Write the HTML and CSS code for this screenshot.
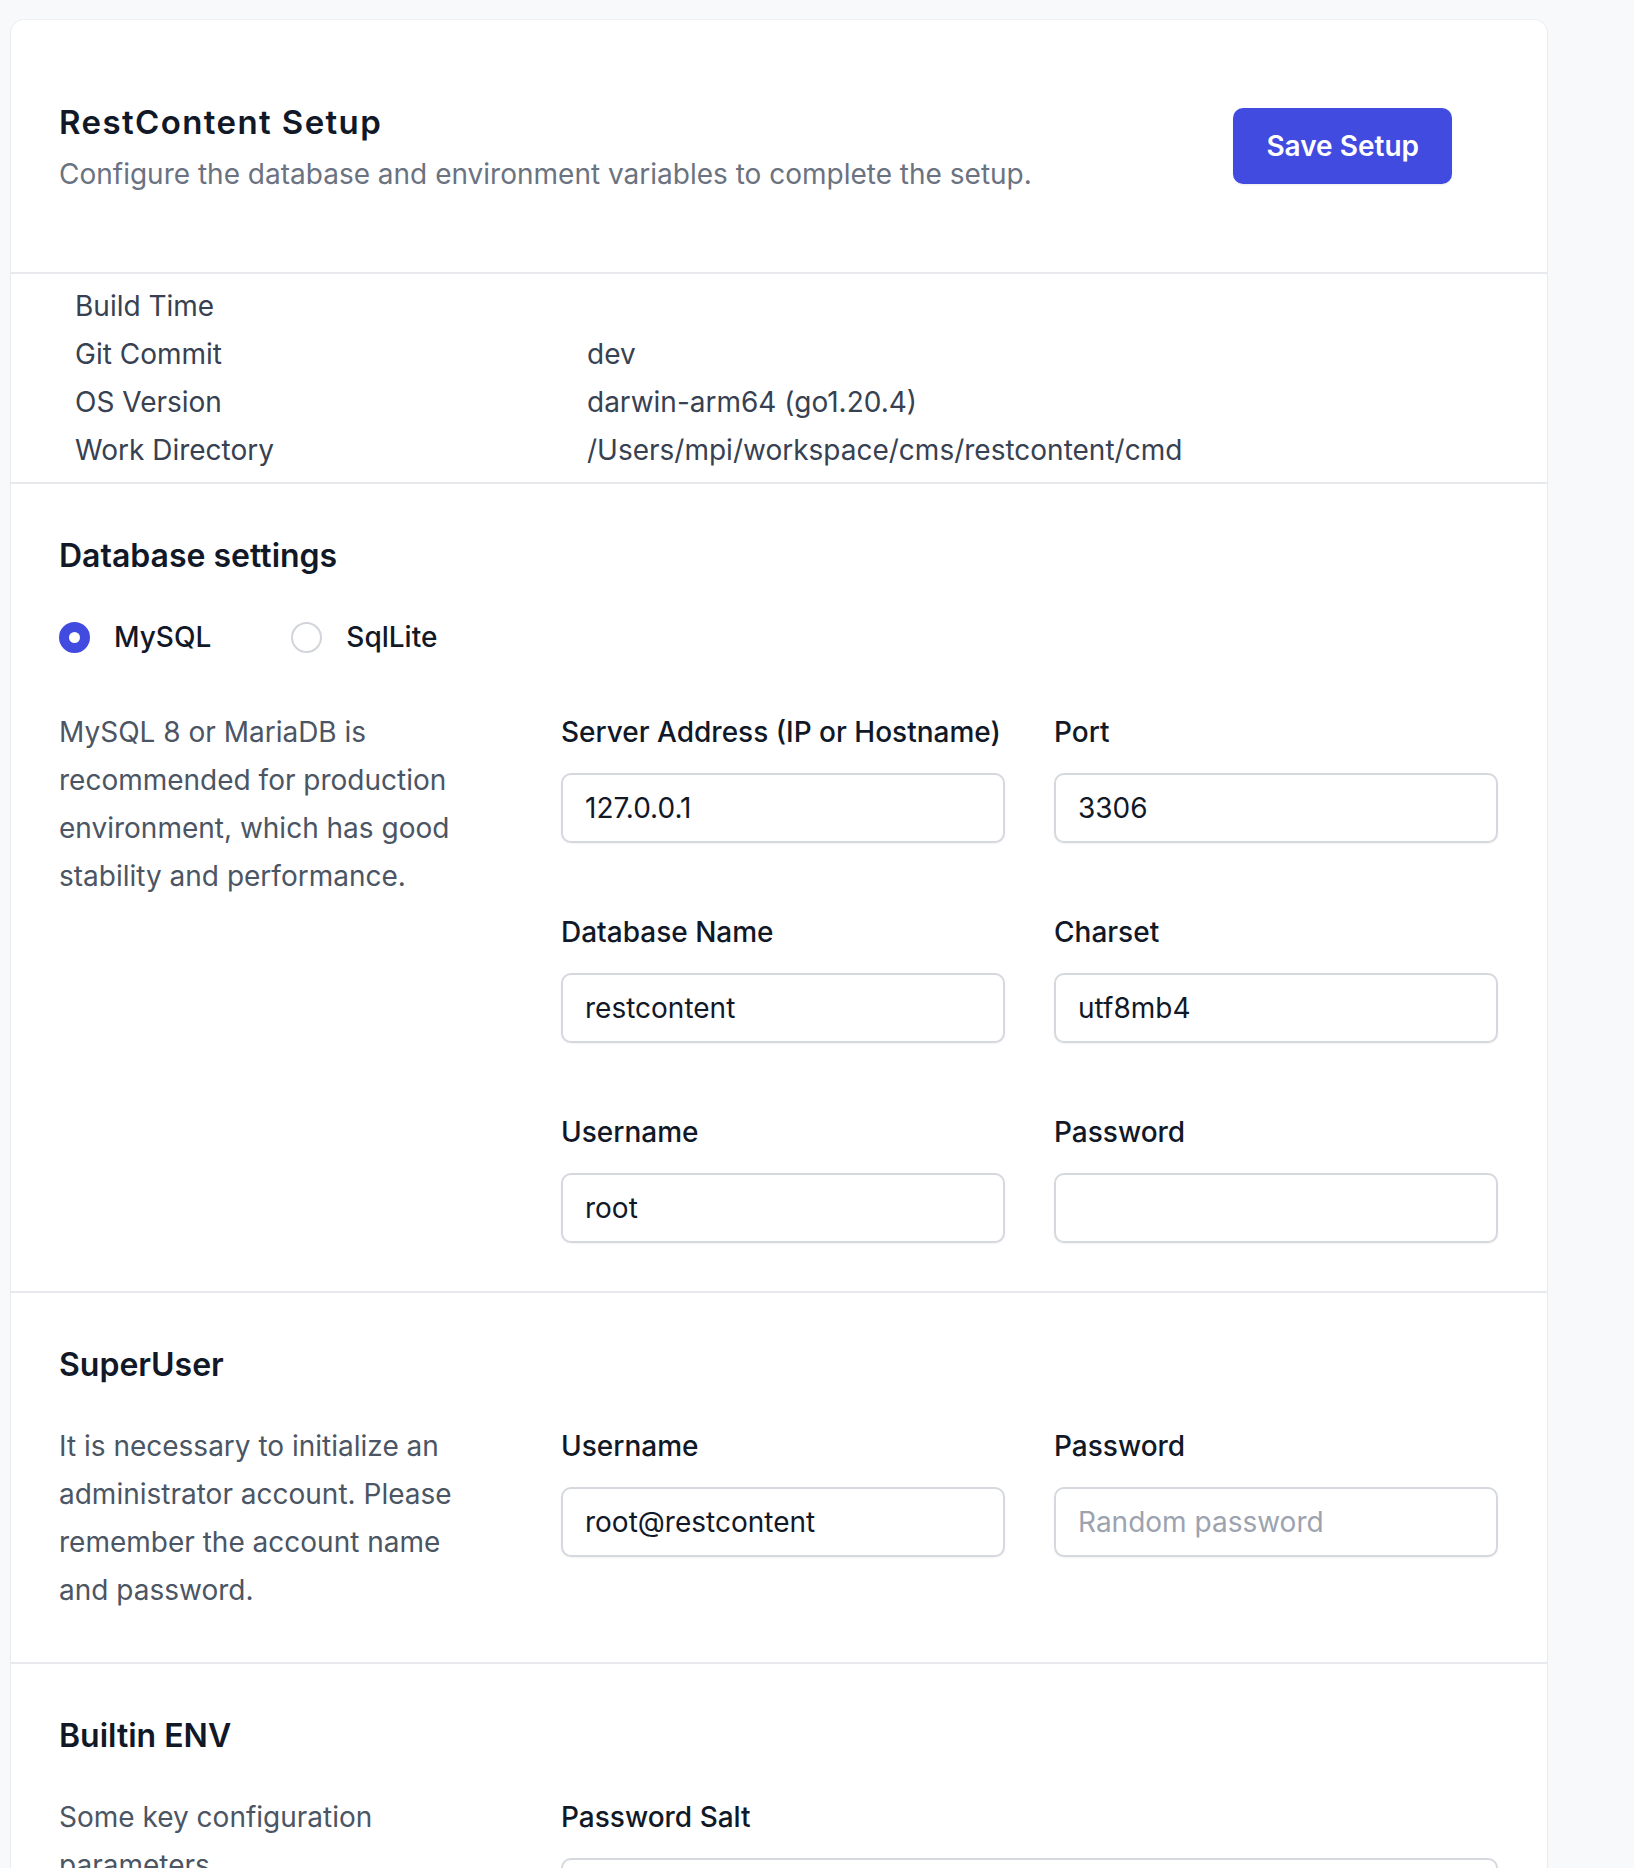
FILE: index.html
```html
<!DOCTYPE html>
<html lang="en">
<head>
<meta charset="utf-8">
<title>RestContent Setup</title>
<link rel="stylesheet" href="styles.css">
</head>
<body>
<div class="card">
  <header class="head">
    <div class="head-text">
      <h1 class="title">RestContent Setup</h1>
      <p class="subtitle">Configure the database and environment variables to complete the setup.</p>
    </div>
    <button class="btn" type="button">Save Setup</button>
  </header>

  <dl class="info">
    <div class="info-row"><dt>Build Time</dt><dd></dd></div>
    <div class="info-row"><dt>Git Commit</dt><dd>dev</dd></div>
    <div class="info-row"><dt>OS Version</dt><dd>darwin-arm64 (go1.20.4)</dd></div>
    <div class="info-row"><dt>Work Directory</dt><dd>/Users/mpi/workspace/cms/restcontent/cmd</dd></div>
  </dl>

  <section class="sec">
    <h2 class="sec-title">Database settings</h2>
    <div class="radios">
      <label class="radio"><span class="dot dot-on"></span><span class="radio-text">MySQL</span></label>
      <label class="radio"><span class="dot"></span><span class="radio-text">SqlLite</span></label>
    </div>
    <div class="grid grid-db">
      <p class="desc">MySQL 8 or MariaDB is recommended for production environment, which has good stability and performance.</p>
      <div class="fields">
        <div class="field"><label class="lbl">Server Address (IP or Hostname)</label><input class="inp" type="text" value="127.0.0.1"></div>
        <div class="field"><label class="lbl">Port</label><input class="inp" type="text" value="3306"></div>
        <div class="field"><label class="lbl">Database Name</label><input class="inp" type="text" value="restcontent"></div>
        <div class="field"><label class="lbl">Charset</label><input class="inp" type="text" value="utf8mb4"></div>
        <div class="field"><label class="lbl">Username</label><input class="inp" type="text" value="root"></div>
        <div class="field"><label class="lbl">Password</label><input class="inp" type="password" value=""></div>
      </div>
    </div>
  </section>

  <section class="sec">
    <h2 class="sec-title">SuperUser</h2>
    <div class="grid">
      <p class="desc">It is necessary to initialize an administrator account. Please remember the account name and password.</p>
      <div class="fields">
        <div class="field"><label class="lbl">Username</label><input class="inp" type="text" value="root@restcontent"></div>
        <div class="field"><label class="lbl">Password</label><input class="inp" type="text" placeholder="Random password"></div>
      </div>
    </div>
  </section>

  <section class="sec">
    <h2 class="sec-title">Builtin ENV</h2>
    <div class="grid">
      <p class="desc">Some key configuration parameters.</p>
      <div class="fields">
        <div class="field field-wide"><label class="lbl">Password Salt</label><input class="inp" type="text" value=""></div>
      </div>
    </div>
  </section>
</div>
</body>
</html>
```

FILE: styles.css
```css
* { box-sizing: border-box; }

html, body {
  margin: 0;
  padding: 0;
}

body {
  background: #f8f9fb;
  font-family: Inter, "Noto Sans", "Liberation Sans", sans-serif;
  color: #111827;
  padding: 20px 0 40px 11px;
}

.card {
  width: 1536px;
  background: #ffffff;
  border-radius: 13px;
  box-shadow: 0 1px 3px rgba(17, 24, 39, 0.08), 0 0 0 1px rgba(17, 24, 39, 0.03);
}

.head {
  display: flex;
  justify-content: space-between;
  align-items: flex-start;
  height: 254px;
  padding: 82px 95px 0 48px;
  border-bottom: 2px solid #e8e9ed;
}

.title {
  margin: 0;
  font-size: 33px;
  line-height: 40px;
  font-weight: 600;
  letter-spacing: 1.4px;
  color: #111827;
}

.subtitle {
  margin: 12px 0 0;
  font-size: 28px;
  line-height: 40px;
  color: #6b7280;
}

.btn {
  margin-top: 6px;
  height: 76px;
  padding: 0 33px;
  border: none;
  border-radius: 10px;
  background: #424bdf;
  color: #ffffff;
  font-family: inherit;
  font-size: 28px;
  font-weight: 600;
  box-shadow: 0 1px 2px rgba(0, 0, 0, 0.08);
}

.info {
  margin: 0;
  padding: 8px 0 8px 64px;
  border-bottom: 2px solid #e8e9ed;
}

.info-row {
  display: grid;
  grid-template-columns: 512px 1fr;
  height: 48px;
  font-size: 28px;
  line-height: 48px;
  color: #374151;
}

.info-row dt, .info-row dd { margin: 0; }

.sec {
  padding: 52px 49px 48px 48px;
  border-bottom: 2px solid #e8e9ed;
}

.sec-title {
  margin: 0;
  font-size: 32px;
  line-height: 40px;
  font-weight: 600;
  color: #111827;
}

.radios {
  display: flex;
  gap: 80px;
  margin-top: 41px;
}

.radio {
  display: flex;
  align-items: center;
  gap: 24px;
}

.dot {
  width: 31px;
  height: 31px;
  border-radius: 50%;
  border: 2px solid #d1d5db;
  background: #ffffff;
  display: flex;
  align-items: center;
  justify-content: center;
}

.dot-on {
  border-color: #424bdf;
  background: #424bdf;
}

.dot-on::after {
  content: "";
  width: 11px;
  height: 11px;
  border-radius: 50%;
  background: #ffffff;
}

.radio-text {
  font-size: 28px;
  line-height: 40px;
  font-weight: 500;
  color: #111827;
}

.grid {
  display: grid;
  grid-template-columns: 420px 1fr;
  column-gap: 82px;
  margin-top: 37px;
}

.grid-db { margin-top: 51px; }

.desc {
  margin: 0;
  font-size: 28px;
  line-height: 48px;
  color: #4b5563;
}

.fields {
  display: grid;
  grid-template-columns: 1fr 1fr;
  column-gap: 49px;
  row-gap: 65px;
}

.field-wide { grid-column: 1 / -1; }

.lbl {
  display: block;
  font-size: 28px;
  line-height: 48px;
  font-weight: 500;
  color: #111827;
}

.inp {
  display: block;
  width: 100%;
  height: 70px;
  margin-top: 17px;
  padding: 0 22px;
  border: 2px solid #d5d8de;
  border-radius: 10px;
  background: #ffffff;
  font-family: inherit;
  font-size: 28px;
  color: #111827;
  box-shadow: 0 1px 2px rgba(0, 0, 0, 0.05);
  outline: none;
}

.inp::placeholder { color: #9ca3af; }
```
